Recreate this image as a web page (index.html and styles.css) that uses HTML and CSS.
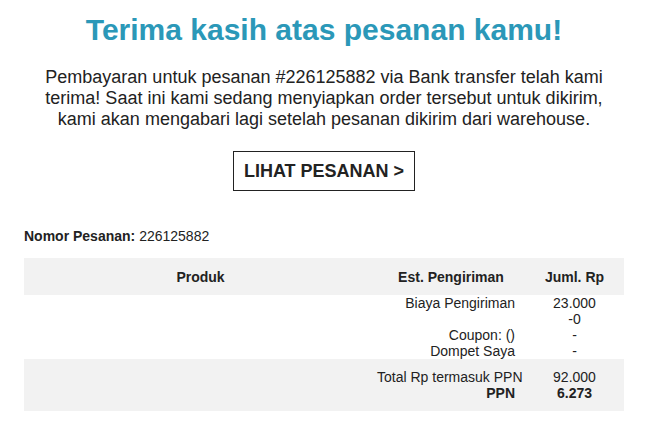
FILE: index.html
```html
<!DOCTYPE html>
<html lang="id">
<head>
<meta charset="utf-8">
<link rel="stylesheet" href="styles.css">
</head>
<body>
<div class="page">
  <h1 class="title">Terima kasih atas pesanan kamu!</h1>
  <p class="intro">Pembayaran untuk pesanan #226125882 via Bank transfer telah kami terima! Saat ini kami sedang menyiapkan order tersebut untuk dikirim, kami akan mengabari lagi setelah pesanan dikirim dari warehouse.</p>
  <div class="btn-wrap"><a class="btn" href="#">LIHAT PESANAN &gt;</a></div>
  <p class="order-no"><strong>Nomor Pesanan:</strong> 226125882</p>
  <table class="order">
    <thead>
      <tr>
        <th class="c-prod">Produk</th>
        <th class="c-ship">Est. Pengiriman</th>
        <th class="c-amt">Juml. Rp</th>
      </tr>
    </thead>
    <tbody>
      <tr>
        <td></td>
        <td class="lbl">Biaya Pengiriman</td>
        <td class="val">23.000<br>-0</td>
      </tr>
      <tr>
        <td></td>
        <td class="lbl">Coupon: ()</td>
        <td class="val">-</td>
      </tr>
      <tr>
        <td></td>
        <td class="lbl">Dompet Saya</td>
        <td class="val">-</td>
      </tr>
    </tbody>
    <tfoot>
      <tr class="first">
        <td></td>
        <td class="lbl">Total Rp termasuk PPN</td>
        <td class="val">92.000</td>
      </tr>
      <tr class="last">
        <td></td>
        <td class="lbl bold">PPN</td>
        <td class="val bold">6.273</td>
      </tr>
    </tfoot>
  </table>
</div>
</body>
</html>
```

FILE: styles.css
```css
html, body {
  margin: 0;
  padding: 0;
  background: #fff;
}
body {
  font-family: "Liberation Sans", Arial, sans-serif;
  color: #222;
}
.page {
  padding: 0 26px 0 24px;
}
.title {
  margin: 0;
  padding-top: 12px;
  font-size: 30px;
  line-height: 36px;
  font-weight: bold;
  color: #2b98b8;
  text-align: center;
}
.intro {
  margin: 19px 0 0;
  font-size: 18px;
  line-height: 21px;
  text-align: center;
}
.btn-wrap {
  display: flex;
  justify-content: center;
  margin-top: 21px;
}
.btn {
  display: block;
  border: 1px solid #222;
  padding: 9px 10px;
  font-size: 18px;
  line-height: 20px;
  font-weight: bold;
  color: #222;
  text-decoration: none;
}
.order-no {
  margin: 37px 0 0;
  font-size: 14px;
  line-height: 16px;
}
.order {
  margin-top: 14px;
  width: 600px;
  border-collapse: collapse;
  table-layout: fixed;
  font-size: 14px;
  line-height: 16px;
}
.order th {
  background: #f2f2f2;
  font-size: 14px;
  font-weight: bold;
  height: 37px;
  padding: 0;
  text-align: center;
}
.c-prod { width: 353px; }
.c-ship { width: 148px; }
.c-amt { width: 99px; }
.order td {
  padding: 0;
  vertical-align: top;
}
.order td.lbl {
  text-align: right;
  padding-right: 10px;
  white-space: nowrap;
}
.order td.val {
  text-align: center;
}
.order tfoot td { background: #f2f2f2; }
.order tfoot tr.first td { padding-top: 10px; }
.order tfoot tr.last td { padding-bottom: 10px; }
.bold { font-weight: bold; }
```
